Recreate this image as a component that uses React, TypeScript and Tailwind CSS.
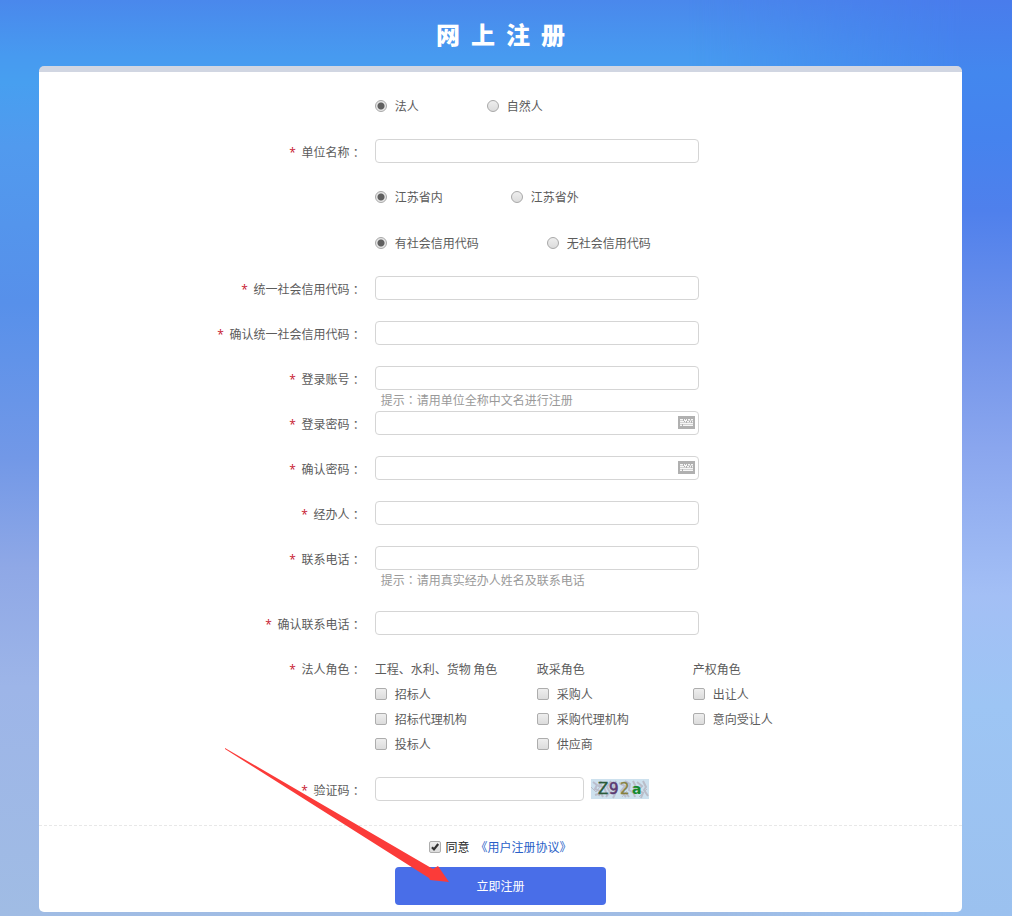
import type { ReactNode } from "react";

const roleGroups = [
  { title: "工程、水利、货物 角色", roles: ["招标人", "招标代理机构", "投标人"] },
  { title: "政采角色", roles: ["采购人", "采购代理机构", "供应商"] },
  { title: "产权角色", roles: ["出让人", "意向受让人"] },
];

const inputClass =
  "block h-6 rounded border border-[#d5d5d5] bg-white px-2 text-xs text-[#555] outline-none focus:border-[#4a6ee8]";

function Row({ label, htmlFor, children }: { label: string; htmlFor?: string; children: ReactNode }) {
  return (
    <div className="grid min-h-[45px] grid-cols-[4fr_7fr] items-start pt-[10px]">
      <label htmlFor={htmlFor} className="pr-[13px] text-right leading-[26px]">
        <span className="mr-[3px] text-[#c7152f] font-['Open_Sans',sans-serif]">*</span> {label}
        {/* full-width colon, nudged towards the middle of its cell */}
        <span className="inline-block w-3 indent-[3px] whitespace-nowrap">：</span>
      </label>
      <div>{children}</div>
    </div>
  );
}

function KeyboardIcon() {
  return (
    <svg width="17" height="13" viewBox="0 0 17 13" shapeRendering="crispEdges" aria-hidden="true">
      <rect width="17" height="13" fill="#b0b0b0" />
      <rect x="2" y="3" width="13" height="7" fill="#f6f6f6" />
      <path fill="#d2d2d2" d="M2 4h3v1H2zM9 4h6v1H9zM2 6h13v1H2zM2 8h13v1H2z" />
      <path
        fill="#b0b0b0"
        d="M5 3h1v2H5zM7 3h1v1H7zM9 3h1v2H9zM12 3h1v1h-1zM6 5h1v1H6zM8 5h1v2H8zM11 5h1v1h-1zM13 5h1v2h-1zM4 8h1v2H4z"
      />
    </svg>
  );
}

type FieldProps = { id: string; label: string; type?: string; hint?: string; keyboard?: boolean };

function Field({ id, label, type = "text", hint, keyboard }: FieldProps) {
  return (
    <Row label={label} htmlFor={id}>
      <div className="relative w-[324px]">
        <input id={id} type={type} className={`${inputClass} w-full`} />
        {keyboard && (
          <button type="button" aria-label="软键盘" className="absolute top-[5px] right-1 cursor-pointer">
            <KeyboardIcon />
          </button>
        )}
      </div>
      {hint && (
        <p className="-mb-[10px] pl-[6px] leading-5 text-[#999]">
          提示<span className="font-['Noto_Sans_CJK_TC',sans-serif]">：</span>
          {hint}
        </p>
      )}
    </Row>
  );
}

function RadioRow({ name, options }: { name: string; options: string[] }) {
  return (
    <div className="grid h-[46px] grid-cols-[4fr_7fr] items-center">
      <div className="col-start-2 flex gap-[68px]">
        {options.map((option, i) => (
          <label key={option} className="flex items-center gap-2 leading-6">
            <input
              type="radio"
              name={name}
              defaultChecked={i === 0}
              className="size-3 appearance-none rounded-full border border-[#a8a8a8] bg-linear-to-b from-[#eee] to-[#dcdcdc] checked:bg-radial checked:from-[#606060] checked:from-[3px] checked:to-[#e6e6e6] checked:to-[4px]"
            />
            {option}
          </label>
        ))}
      </div>
    </div>
  );
}

function Check({ label }: { label: string }) {
  return (
    <label className="flex items-center gap-2 leading-[25px]">
      <input
        type="checkbox"
        className="size-3 appearance-none rounded-xs border border-[#adadad] bg-linear-to-b from-[#eee] to-[#dcdcdc] checked:from-[#777] checked:to-[#777]"
      />
      {label}
    </label>
  );
}

function Captcha() {
  return (
    <svg width="58" height="20" viewBox="0 0 58 20" role="img" aria-label="Z92a">
      <rect width="58" height="20" fill="#cde1ee" />
      <g fill="none" strokeWidth="2" opacity="0.75">
        <path stroke="#b5b2c2" d="M2 3l4 3-2 4 5 2-1 5M10 2l-2 5 5 1 3 8M15 18l4-5-3-5 4-6M25 2l-4 8 4 3-3 6M28 4l6 3-4 5 5 6M34 2l5 3-1 6 5 3" />
        <path stroke="#b4b1bc" d="M4 16l6-2 2 4M42 2l3 6-3 4 2 6M46 3l5 4-4 4 5 3-2 5M52 2l3 6-2 3 4 6M38 18l-3-4" />
        <path stroke="#b3b3bd" strokeWidth="1" d="M0 8l5 5 6-8M19 15l6-9M31 18l5-6M41 8l8 5M48 18l8-8" />
      </g>
      <g fontFamily="'DejaVu Sans', sans-serif" fontSize="15">
        <text x="7" y="15" fill="#2c5b3a" stroke="#2c5b3a" strokeWidth="0.4">Z</text>
        <text x="18" y="15" fill="#5b3a72" stroke="#5b3a72" strokeWidth="0.6">9</text>
        <text x="29" y="15" fill="#86803f" stroke="#86803f" strokeWidth="0.4">2</text>
        <text x="41" y="15" fill="#148a2e" fontSize="14" fontWeight="bold">a</text>
      </g>
    </svg>
  );
}

function Background() {
  return (
    <div className="absolute inset-0 -z-10 bg-[linear-gradient(to_bottom,#4a88ec_0%,#479af0_6%,#479ff0_9%,#519aee_16%,#5790ea_33%,#7298e7_50%,#8fa8e6_62%,#9db5e8_75%,#a0bce4_100%)]">
      <div className="absolute inset-0 bg-[linear-gradient(to_bottom,#497cec_0%,#4387ee_8%,#4583ee_15%,#4f80ec_23%,#6f92ea_36%,#8aa6ee_49%,#a3bff5_65%,#9dc5f4_77%,#9bc1ef_100%)] mask-[linear-gradient(to_right,transparent_68%,black_95%)]" />
    </div>
  );
}

// red pointer towards the submit button
function Pointer() {
  return (
    <svg
      width="224"
      height="135"
      viewBox="0 0 224 135"
      className="pointer-events-none absolute right-[157px] bottom-[22px]"
      aria-hidden="true"
    >
      <path fill="#fb3b39" d="M0 0L208 121L213 118L224 134L205 132L204 130L0 1z" />
    </svg>
  );
}

function App() {
  return (
    <div className="relative isolate min-h-screen pr-[50px] pb-1 pl-[39px] text-xs text-[#5c5c5c] font-['Noto_Sans_CJK_SC',sans-serif]">
      <Background />

      <h1 className="flex h-[66px] items-center justify-center pt-0.5 text-2xl font-black whitespace-pre text-white">
        网  上  注  册
      </h1>

      <form className="rounded-[5px] border-t-[6px] border-[#d1d6e2] bg-white" onSubmit={(e) => e.preventDefault()}>
        <div className="pt-[11px] pb-[13px]">
          <RadioRow name="subject" options={["法人", "自然人"]} />
          <Field id="company" label="单位名称" />
          <RadioRow name="province" options={["江苏省内", "江苏省外"]} />
          <RadioRow name="credit" options={["有社会信用代码", "无社会信用代码"]} />
          <Field id="code" label="统一社会信用代码" />
          <Field id="code2" label="确认统一社会信用代码" />
          <Field id="account" label="登录账号" hint="请用单位全称中文名进行注册" />
          <Field id="password" label="登录密码" type="password" keyboard />
          <Field id="password2" label="确认密码" type="password" keyboard />
          <Field id="agent" label="经办人" />
          <div className="pb-5">
            <Field id="phone" label="联系电话" type="tel" hint="请用真实经办人姓名及联系电话" />
          </div>
          <Field id="phone2" label="确认联系电话" type="tel" />

          {/* Roles */}
          <div className="pb-[11px]">
            <Row label="法人角色">
              <div className="grid grid-cols-[162px_156px_auto]">
                {roleGroups.map((group) => (
                  <div key={group.title}>
                    <p className="leading-[25px]">{group.title}</p>
                    {group.roles.map((role) => (
                      <Check key={role} label={role} />
                    ))}
                  </div>
                ))}
              </div>
            </Row>
          </div>

          <Row label="验证码" htmlFor="captcha">
            <div className="flex items-center gap-[7px]">
              <input id="captcha" type="text" className={`${inputClass} w-[209px]`} />
              <Captcha />
            </div>
          </Row>
        </div>

        {/* Agreement and submit */}
        <div className="flex flex-col items-center border-t border-dashed border-[#e8e8e8] pt-[11px] pb-[7px]">
          <div className="flex h-5 items-center gap-[6px]">
            <label className="flex items-center gap-1 text-[#222]">
              <span className="relative size-3">
                <input
                  type="checkbox"
                  defaultChecked
                  className="block size-3 appearance-none rounded-xs border border-[#adadad] bg-linear-to-b from-[#eee] to-[#dcdcdc]"
                />
                <svg width="12" height="12" viewBox="0 0 12 12" className="pointer-events-none absolute inset-0">
                  <path d="M3 6.2L5 8.4L9.2 3" fill="none" stroke="#333" strokeWidth="2.2" />
                </svg>
              </span>
              同意
            </label>
            <a href="#agreement" className="text-[#2a5fc8]">
              《用户注册协议》
            </a>
          </div>
          <div className="relative mt-[10px]">
            <button type="submit" className="block h-[38px] w-[211px] cursor-pointer rounded bg-[#496ee8] text-white">
              立即注册
            </button>
            <Pointer />
          </div>
        </div>
      </form>
    </div>
  );
}

export default App;
